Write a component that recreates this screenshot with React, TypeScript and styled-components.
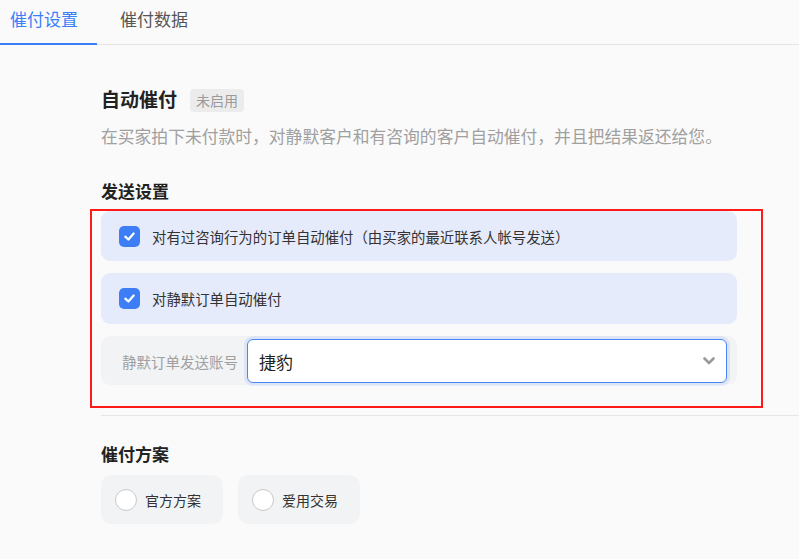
import React from "react";
import styled, { createGlobalStyle } from "styled-components";

const Global = createGlobalStyle`
  html, body { margin: 0; padding: 0; }
  body {
    background: #fafafa;
    font-family: "Noto Sans CJK SC", "Noto Sans", sans-serif;
    color: #333;
  }
`;

const Page = styled.div`
  min-height: 559px;
  background: #fafafa;
`;

const TabBar = styled.div`
  display: flex;
  height: 44px;
  border-bottom: 1px solid #e3e5ea;
`;

const Tab = styled.div<{ $active?: boolean }>`
  box-sizing: border-box;
  height: 45px;
  padding: 0 0 5px 10px;
  width: ${(p) => (p.$active ? "97px" : "auto")};
  margin-left: ${(p) => (p.$active ? "0" : "13px")};
  display: flex;
  align-items: center;
  font-size: 17px;
  line-height: 24px;
  color: ${(p) => (p.$active ? "#3b7ff6" : "#555")};
  border-bottom: 2px solid ${(p) => (p.$active ? "#3b7ff6" : "transparent")};
`;

const Content = styled.div`
  padding-left: 101px;
`;

const TitleRow = styled.div`
  margin-top: 42px;
  height: 24px;
  display: flex;
  align-items: center;
  gap: 13px;
`;

const Title = styled.div`
  font-size: 19px;
  font-weight: 700;
  line-height: 24px;
  color: #222;
`;

const Badge = styled.span`
  display: inline-flex;
  align-items: center;
  height: 23px;
  padding: 0 6px;
  border-radius: 4px;
  background: #ececec;
  color: #9a9a9a;
  font-size: 14px;
  margin-top: 2px;
`;

const Desc = styled.div`
  margin-top: 14px;
  font-size: 16.8px;
  line-height: 22px;
  color: #a0a0a0;
`;

const SectionTitle = styled.div<{ $top: number }>`
  margin-top: ${(p) => p.$top}px;
  font-size: 17px;
  font-weight: 700;
  line-height: 24px;
  color: #222;
`;

const Highlight = styled.div`
  margin-top: 6px;
  margin-left: -11px;
  width: 673px;
  box-sizing: border-box;
  border: 2px solid #ff1a1a;
  padding: 0 24px 21px 9px;
  display: flex;
  flex-direction: column;
  gap: 12px;
`;

const CheckRow = styled.div<{ $h: number }>`
  height: ${(p) => p.$h}px;
  border-radius: 9px;
  background: #e6ebfb;
  display: flex;
  align-items: center;
  padding-left: 18px;
  gap: 12px;
  font-size: 14.4px;
  color: #333;
`;

const Check = styled.span`
  width: 21px;
  height: 21px;
  border-radius: 5px;
  background: #3d7ef6;
  display: inline-flex;
  align-items: center;
  justify-content: center;
  flex: none;
`;

const AccountRow = styled.div`
  height: 49px;
  box-sizing: border-box;
  border-radius: 9px;
  background: #f2f3f5;
  display: flex;
  align-items: center;
  padding: 1px 10px 0 21px;
`;

const AccountLabel = styled.span`
  font-size: 14.5px;
  color: #a0a0a0;
  width: 125px;
  flex: none;
`;

const Select = styled.div`
  flex: 1;
  height: 44px;
  box-sizing: border-box;
  border: 1px solid #4a86f7;
  border-radius: 6px;
  background: #fff;
  box-shadow: 0 0 0 3px rgba(74, 134, 247, 0.12);
  display: flex;
  align-items: center;
  justify-content: space-between;
  padding: 0 11px;
  font-size: 17px;
  color: #222;
`;

const Separator = styled.div`
  margin-top: 7px;
  height: 1px;
  background: #e6e6e6;
`;

const RadioRow = styled.div`
  margin-top: 9px;
  display: flex;
  gap: 15px;
`;

const RadioCard = styled.div`
  width: 122px;
  height: 49px;
  box-sizing: border-box;
  border-radius: 10px;
  background: #f2f3f5;
  display: flex;
  align-items: center;
  padding-left: 14px;
  gap: 8px;
  font-size: 14px;
  color: #333;
`;

const Radio = styled.span`
  width: 20px;
  height: 20px;
  border-radius: 50%;
  border: 1px solid #c9c9c9;
  background: #fff;
  flex: none;
`;

const CheckMark = () => (
  <svg width="13" height="13" viewBox="0 0 14 14" fill="none">
    <path d="M2.5 7.2 L5.8 10.2 L11.5 3.8" stroke="#fff" strokeWidth="2.4" strokeLinecap="round" strokeLinejoin="round" />
  </svg>
);

const Chevron = () => (
  <svg width="12" height="8" viewBox="0 0 12 8" fill="none">
    <path d="M1.5 1.5 L6 6 L10.5 1.5" stroke="#9a9a9a" strokeWidth="2.6" strokeLinecap="round" strokeLinejoin="round" />
  </svg>
);

export default function App() {
  return (
    <Page>
      <Global />
      <TabBar>
        <Tab $active>催付设置</Tab>
        <Tab>催付数据</Tab>
      </TabBar>
      <Content>
        <TitleRow>
          <Title>自动催付</Title>
          <Badge>未启用</Badge>
        </TitleRow>
        <Desc>在买家拍下未付款时，对静默客户和有咨询的客户自动催付，并且把结果返还给您。</Desc>
        <SectionTitle $top={32}>发送设置</SectionTitle>
        <Highlight>
          <CheckRow $h={50}>
            <Check><CheckMark /></Check>
            对有过咨询行为的订单自动催付（由买家的最近联系人帐号发送）
          </CheckRow>
          <CheckRow $h={51}>
            <Check><CheckMark /></Check>
            对静默订单自动催付
          </CheckRow>
          <AccountRow>
            <AccountLabel>静默订单发送账号</AccountLabel>
            <Select>
              <span>捷豹</span>
              <Chevron />
            </Select>
          </AccountRow>
        </Highlight>
        <Separator />
        <SectionTitle $top={26}>催付方案</SectionTitle>
        <RadioRow>
          <RadioCard><Radio />官方方案</RadioCard>
          <RadioCard><Radio />爱用交易</RadioCard>
        </RadioRow>
      </Content>
    </Page>
  );
}
